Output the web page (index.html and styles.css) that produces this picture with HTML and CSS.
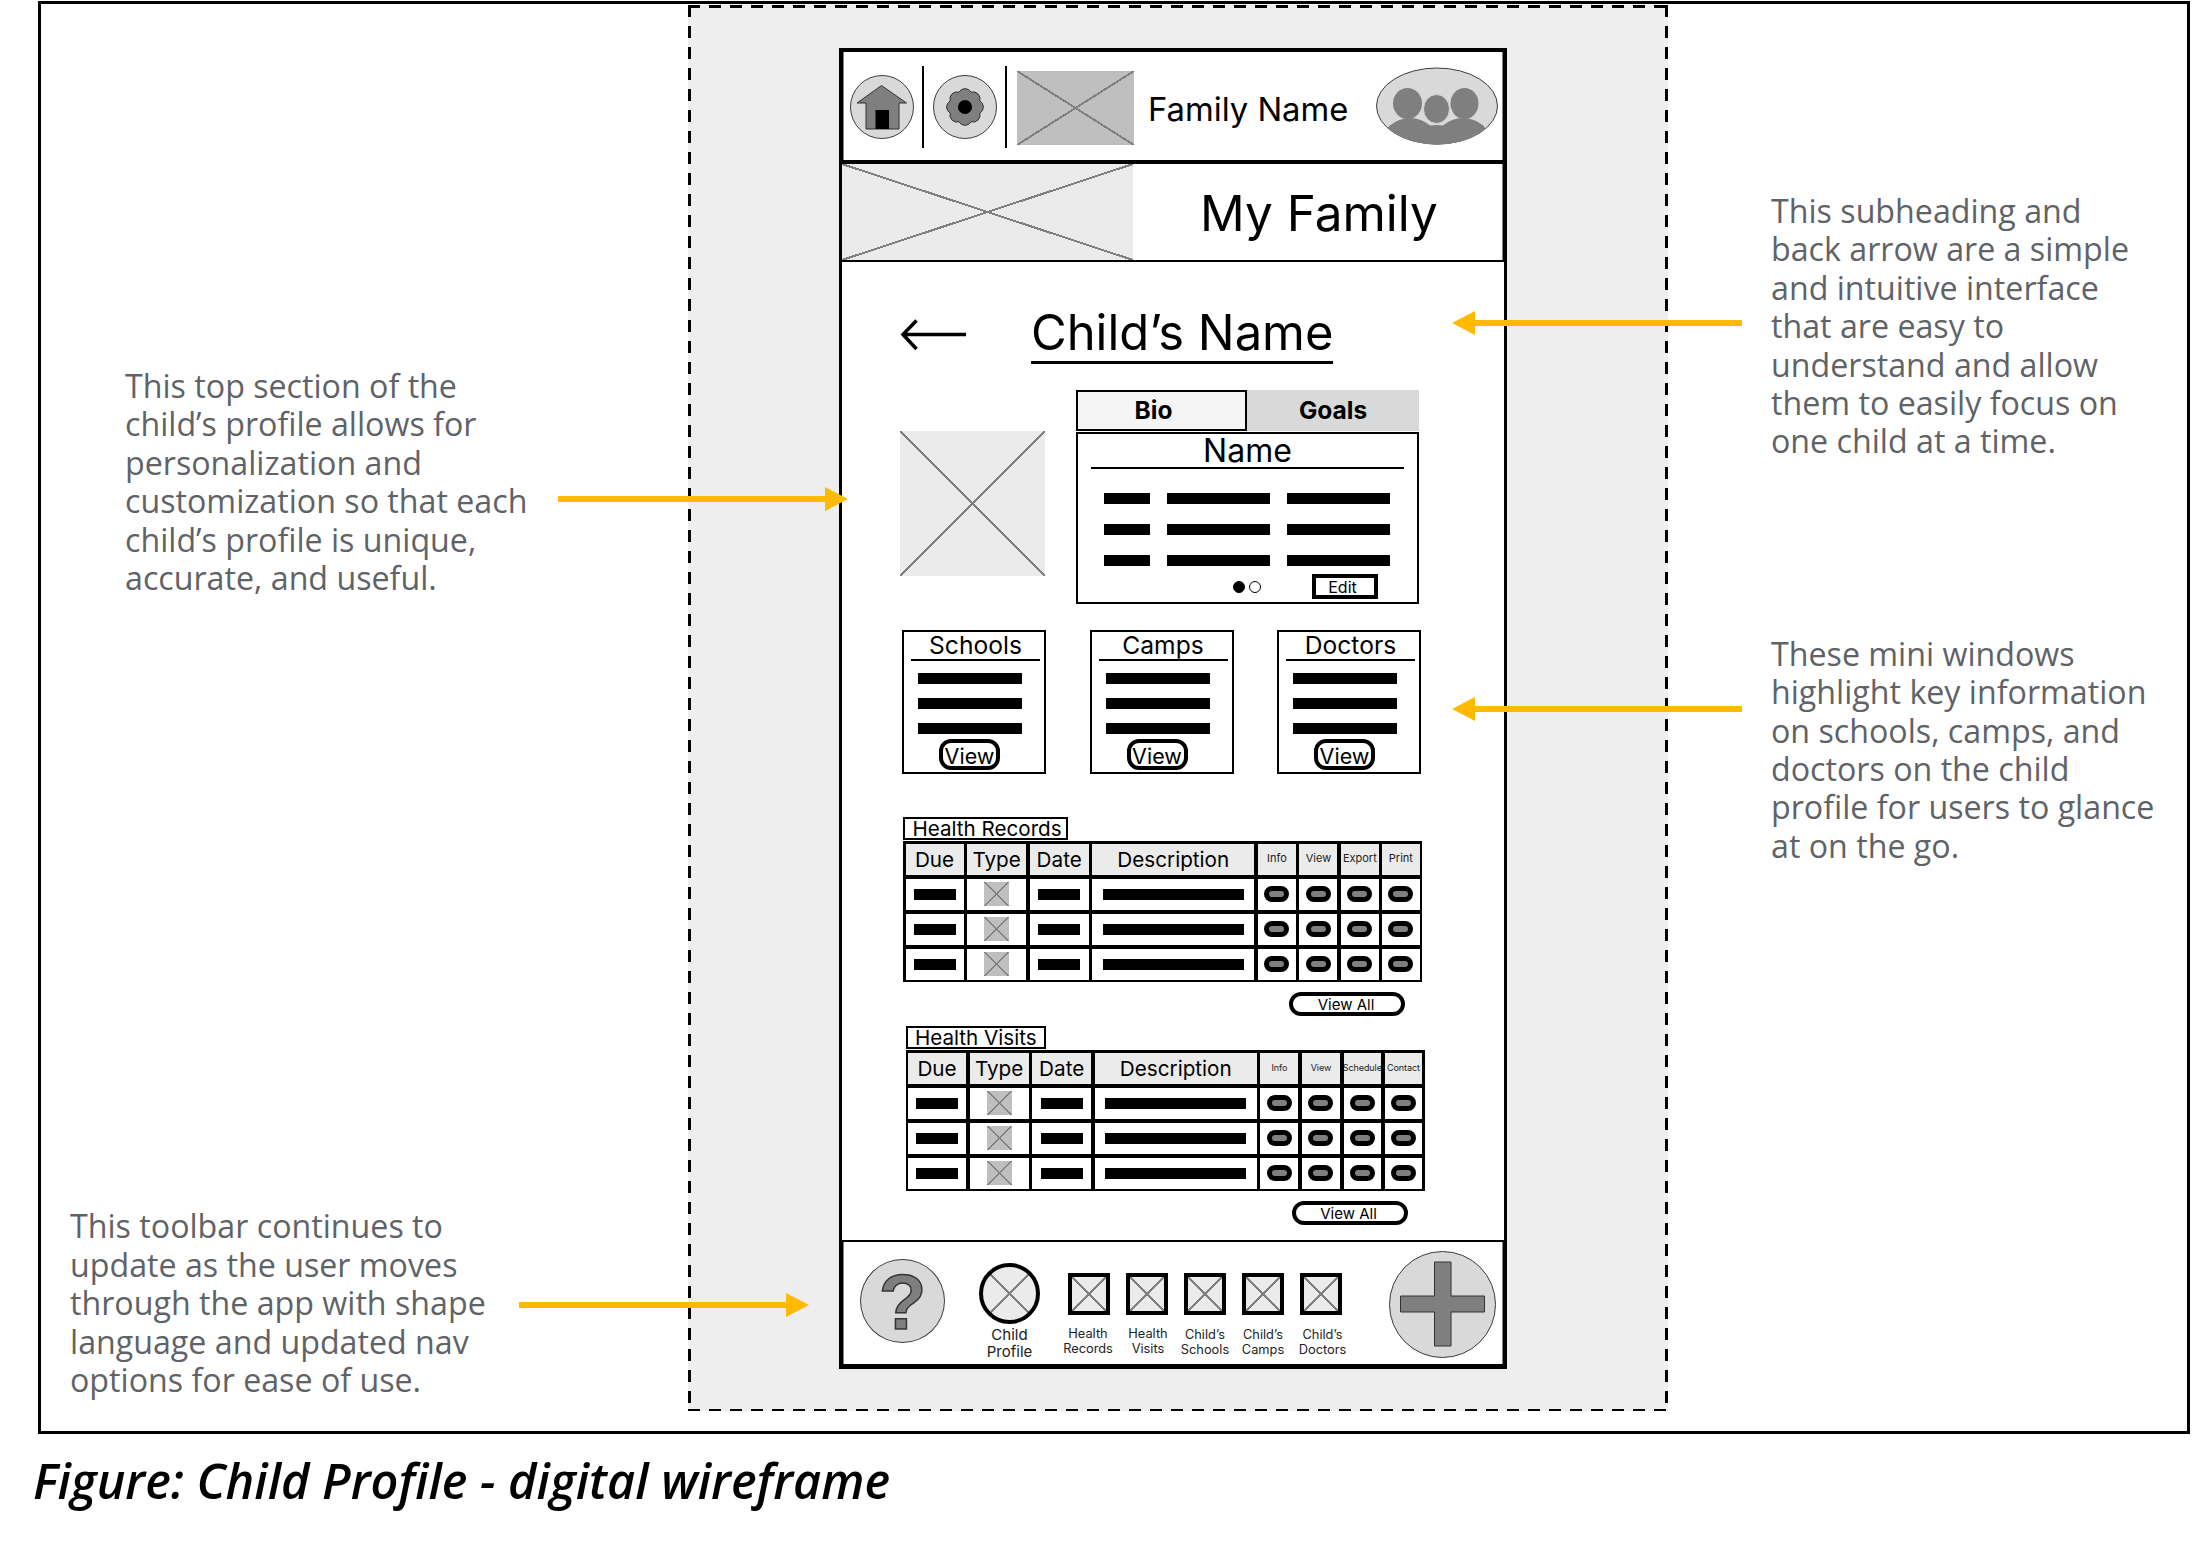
FILE: index.html
```html
<!DOCTYPE html>
<html lang="en">
<head>
<meta charset="utf-8">
<title>Child Profile - digital wireframe</title>
<link rel="stylesheet" href="styles.css">
</head>
<body>
<main class="frame">
  <aside class="notes notes-left">
    <p class="note note-top">This top section of the<br>child’s profile allows for<br>personalization and<br>customization so that each<br>child’s profile is unique,<br>accurate, and useful.</p>
    <p class="note note-bottom">This toolbar continues to<br>update as the user moves<br>through the app with shape<br>language and updated nav<br>options for ease of use.</p>
  </aside>

  <section class="panel">
    <div class="phone">
      <header class="app-header">
        <svg class="ico-home" viewBox="0 0 64 64"><circle cx="32" cy="32" r="31.5" class="disc"/><path class="glyph" d="M31.5 10.5 56.5 28H49V54H16V28H7Z"/><rect x="25.5" y="35" width="13.5" height="19" fill="#000"/></svg>
        <span class="sep"></span>
        <svg class="ico-gear" viewBox="0 0 64 64"><circle cx="32" cy="32" r="31.5" class="disc"/><path class="glyph" d="M46.8 38.1A7 7 0 0 1 38.1 46.8 7 7 0 0 1 25.9 46.8 7 7 0 0 1 17.2 38.1 7 7 0 0 1 17.2 25.9 7 7 0 0 1 25.9 17.2 7 7 0 0 1 38.1 17.2 7 7 0 0 1 46.8 25.9 7 7 0 0 1 46.8 38.1Z"/><circle cx="32" cy="32" r="7" fill="#000"/></svg>
        <span class="sep"></span>
        <div class="ph ph-dark logo"></div>
        <span class="family-name">Family Name</span>
        <svg class="ico-family" viewBox="0 0 122 78"><defs><clipPath id="oval"><ellipse cx="61" cy="39" rx="60.5" ry="38.5"/></clipPath></defs><ellipse cx="61" cy="39" rx="60.5" ry="38" class="disc"/><g clip-path="url(#oval)" fill="#7f7f7f"><ellipse cx="34" cy="76" rx="28" ry="25"/><ellipse cx="87" cy="76" rx="28" ry="25"/><ellipse cx="60.5" cy="84" rx="30" ry="26"/></g><ellipse cx="31.5" cy="36.5" rx="14.5" ry="15.5" fill="#7f7f7f"/><ellipse cx="88.5" cy="36.5" rx="14" ry="15.5" fill="#7f7f7f"/><ellipse cx="60.5" cy="42" rx="13" ry="14.5" fill="#7f7f7f" stroke="#d9d9d9" stroke-width="1"/></svg>
      </header>
      <div class="banner">
        <div class="ph ph-light banner-img"></div>
        <h1 class="banner-title">My Family</h1>
      </div>

      <div class="content">
        <div class="title-row">
          <svg class="back" viewBox="0 0 66 32"><path d="M66 15.5H3M16.5 1.5 3 15.5 16.5 30" fill="none" stroke="#000" stroke-width="3.5"/></svg>
          <h2 class="child-name">Child’s Name</h2>
        </div>

        <div class="profile-row">
          <div class="ph ph-light photo"></div>
          <div class="bio">
            <div class="tabs">
              <div class="tab tab-active">Bio</div>
              <div class="tab tab-idle">Goals</div>
            </div>
            <div class="bio-panel">
              <div class="bio-name">Name</div>
              <div class="bio-bars">
                <i class="bar"></i><i class="bar"></i><i class="bar"></i>
                <i class="bar"></i><i class="bar"></i><i class="bar"></i>
                <i class="bar"></i><i class="bar"></i><i class="bar"></i>
              </div>
              <div class="bio-foot">
                <span class="dot dot-on"></span><span class="dot"></span>
                <span class="edit">Edit</span>
              </div>
            </div>
          </div>
        </div>

        <div class="cards">
          <article class="card"><div class="card-title">Schools</div><i class="bar card-bar"></i><i class="bar card-bar"></i><i class="bar card-bar"></i><span class="view">View</span></article>
          <article class="card"><div class="card-title">Camps</div><i class="bar card-bar"></i><i class="bar card-bar"></i><i class="bar card-bar"></i><span class="view">View</span></article>
          <article class="card"><div class="card-title">Doctors</div><i class="bar card-bar"></i><i class="bar card-bar"></i><i class="bar card-bar"></i><span class="view">View</span></article>
        </div>

        <section class="records">
          <div class="records-tab tab-records">Health Records</div>
          <div class="grid">
            <div class="cell head">Due</div><div class="cell head">Type</div><div class="cell head">Date</div><div class="cell head">Description</div>
            <div class="cell head small">Info</div><div class="cell head small">View</div><div class="cell head small">Export</div><div class="cell head small">Print</div>

            <div class="cell"><i class="bar b-short"></i></div><div class="cell"><div class="ph ph-dark type"></div></div><div class="cell"><i class="bar b-short"></i></div><div class="cell"><i class="bar b-long"></i></div>
            <div class="cell"><i class="pill"></i></div><div class="cell"><i class="pill"></i></div><div class="cell"><i class="pill"></i></div><div class="cell"><i class="pill"></i></div>

            <div class="cell"><i class="bar b-short"></i></div><div class="cell"><div class="ph ph-dark type"></div></div><div class="cell"><i class="bar b-short"></i></div><div class="cell"><i class="bar b-long"></i></div>
            <div class="cell"><i class="pill"></i></div><div class="cell"><i class="pill"></i></div><div class="cell"><i class="pill"></i></div><div class="cell"><i class="pill"></i></div>

            <div class="cell"><i class="bar b-short"></i></div><div class="cell"><div class="ph ph-dark type"></div></div><div class="cell"><i class="bar b-short"></i></div><div class="cell"><i class="bar b-long"></i></div>
            <div class="cell"><i class="pill"></i></div><div class="cell"><i class="pill"></i></div><div class="cell"><i class="pill"></i></div><div class="cell"><i class="pill"></i></div>
          </div>
          <span class="view-all">View All</span>
        </section>

        <section class="records records-visits">
          <div class="records-tab tab-visits">Health Visits</div>
          <div class="grid">
            <div class="cell head">Due</div><div class="cell head">Type</div><div class="cell head">Date</div><div class="cell head">Description</div>
            <div class="cell head tiny">Info</div><div class="cell head tiny">View</div><div class="cell head tiny">Schedule</div><div class="cell head tiny">Contact</div>

            <div class="cell"><i class="bar b-short"></i></div><div class="cell"><div class="ph ph-dark type"></div></div><div class="cell"><i class="bar b-short"></i></div><div class="cell"><i class="bar b-long"></i></div>
            <div class="cell"><i class="pill"></i></div><div class="cell"><i class="pill"></i></div><div class="cell"><i class="pill"></i></div><div class="cell"><i class="pill"></i></div>

            <div class="cell"><i class="bar b-short"></i></div><div class="cell"><div class="ph ph-dark type"></div></div><div class="cell"><i class="bar b-short"></i></div><div class="cell"><i class="bar b-long"></i></div>
            <div class="cell"><i class="pill"></i></div><div class="cell"><i class="pill"></i></div><div class="cell"><i class="pill"></i></div><div class="cell"><i class="pill"></i></div>

            <div class="cell"><i class="bar b-short"></i></div><div class="cell"><div class="ph ph-dark type"></div></div><div class="cell"><i class="bar b-short"></i></div><div class="cell"><i class="bar b-long"></i></div>
            <div class="cell"><i class="pill"></i></div><div class="cell"><i class="pill"></i></div><div class="cell"><i class="pill"></i></div><div class="cell"><i class="pill"></i></div>
          </div>
          <span class="view-all">View All</span>
        </section>
      </div>

      <nav class="toolbar">
        <div class="help">?</div>
        <div class="nav-profile">
          <div class="ph ph-light profile-ring"></div>
          <div class="nav-label label-big">Child<br>Profile</div>
        </div>
        <div class="nav-items">
          <div class="nav-item"><div class="ph ph-light nav-box"></div><div class="nav-label label-records">Health<br>Records</div></div>
          <div class="nav-item"><div class="ph ph-light nav-box"></div><div class="nav-label label-visits">Health<br>Visits</div></div>
          <div class="nav-item"><div class="ph ph-light nav-box"></div><div class="nav-label label-low">Child’s<br>Schools</div></div>
          <div class="nav-item"><div class="ph ph-light nav-box"></div><div class="nav-label label-low">Child’s<br>Camps</div></div>
          <div class="nav-item"><div class="ph ph-light nav-box"></div><div class="nav-label label-low label-doctors">Child’s<br>Doctors</div></div>
        </div>
        <svg class="ico-plus" viewBox="0 0 107 107"><circle cx="53.5" cy="53.5" r="53" class="disc"/><path class="glyph" d="M45.5 11H62V45H95.5V61H62V95H45.5V61H11.5V45H45.5Z"/></svg>
      </nav>
    </div>
  </section>

  <aside class="notes notes-right">
    <p class="note note-sub">This subheading and<br>back arrow are a simple<br>and intuitive interface<br>that are easy to<br>understand and allow<br>them to easily focus on<br>one child at a time.</p>
    <p class="note note-mini">These mini windows<br>highlight key information<br>on schools, camps, and<br>doctors on the child<br>profile for users to glance<br>at on the go.</p>
  </aside>

  <svg class="arrow arrow-sub" viewBox="0 0 290 24"><path d="M290 9H23V0L0 12 23 24V15H290Z"/></svg>
  <svg class="arrow arrow-top" viewBox="0 0 290 24"><path d="M0 9H267V0L290 12 267 24V15H0Z"/></svg>
  <svg class="arrow arrow-mini" viewBox="0 0 290 24"><path d="M290 9H23V0L0 12 23 24V15H290Z"/></svg>
  <svg class="arrow arrow-bottom" viewBox="0 0 290 24"><path d="M0 9H267V0L290 12 267 24V15H0Z"/></svg>
</main>
<p class="caption">Figure: Child Profile - digital wireframe</p>
</body>
</html>
```

FILE: styles.css
```css
* { box-sizing: border-box; }
html, body { margin: 0; padding: 0; background: #fff; }
body { width: 2195px; height: 1553px; overflow: hidden; font-family: "Inter", "Liberation Sans", sans-serif; color: #000; }
h1, h2, p { margin: 0; font-weight: 400; }
i { display: block; }

.frame { position: relative; display: flex; width: 2152px; height: 1433px; margin: 1px 0 0 38px; border: 3px solid #000; }

.notes { font-family: "Open Sans", "Liberation Sans", sans-serif; color: #5f6368; font-size: 32.2px; line-height: 38.4px; white-space: nowrap; }
.notes-left { width: 647px; flex: none; padding-top: 363px; }
.notes-right { flex: 1; padding: 188px 0 0 103px; }
.note-top { margin-left: 84px; }
.note-bottom { margin: 610px 0 0 29px; }
.note-mini { margin-top: 174px; }

.panel { width: 980px; height: 1406px; flex: none; margin-top: 1px; padding: 43px 0 0 151px;
  background:
    linear-gradient(90deg, #000 12px, transparent 12px) 0 0 / 21px 2.5px repeat-x,
    linear-gradient(90deg, #000 12px, transparent 12px) 0 100% / 21px 2.5px repeat-x,
    linear-gradient(#000 12px, transparent 12px) 0 0 / 3px 21px repeat-y,
    linear-gradient(#000 12px, transparent 12px) 100% 0 / 3px 21px repeat-y,
    #eee; }

.phone { display: flex; flex-direction: column; width: 668px; height: 1321px; background: #fff; border: 3px solid #000; border-top-width: 4px; border-bottom-width: 5px; }

/* placeholder: filled box crossed corner to corner */
.ph { --fill: #ebebeb; --line: #7f7f7f; --w: 1px;
  background:
    linear-gradient(to top right, transparent calc(50% - var(--w)), var(--line) calc(50% - var(--w)), var(--line) calc(50% + var(--w)), transparent calc(50% + var(--w))),
    linear-gradient(to bottom right, transparent calc(50% - var(--w)), var(--line) calc(50% - var(--w)), var(--line) calc(50% + var(--w)), transparent calc(50% + var(--w))),
    var(--fill); }
.ph-dark { --fill: #bfbfbf; }

.disc { fill: #d9d9d9; stroke: #3c3c3c; stroke-width: 1; }
.glyph { fill: #7f7f7f; stroke: #333; stroke-width: 1; }

.app-header { display: flex; align-items: center; height: 108px; flex: none; padding: 0 6px 0 8px; border-bottom: 4px solid #000; box-sizing: content-box; box-shadow: inset 1.5px 0 #000, inset -1.5px 0 #000; }
.ico-home { width: 64px; height: 64px; flex: none; margin-top: 1px; }
.ico-gear { width: 64px; height: 64px; flex: none; margin-top: 2px; }
.sep { width: 2px; height: 82px; flex: none; margin: 2px 9px 0 8px; background: #000; }
.logo { width: 117px; height: 74px; flex: none; margin: 4px 0 0 1px; }
.family-name { margin: 5px 0 0 14px; font-size: 32.8px; line-height: 40px; white-space: nowrap; }
.ico-family { width: 122px; height: 78px; flex: none; margin-left: auto; }

.banner { display: flex; align-items: center; height: 98px; flex: none; border-bottom: 2px solid #000; box-shadow: inset 1.5px 0 #000, inset -1.5px 0 #000; }
.banner-img { width: 291px; height: 96px; flex: none; }
.banner-title { margin: 2px 0 0 67px; font-size: 49.5px; line-height: 60px; white-space: nowrap; }

.content { flex: 1; padding: 44px 0 0; }
.title-row { display: flex; align-items: flex-start; height: 58px; padding-left: 58px; }
.back { width: 66px; height: 32px; flex: none; margin-top: 13px; }
.child-name { margin-left: 65px; font-size: 48.9px; line-height: 54px; height: 58px; border-bottom: 3px solid #000; white-space: nowrap; }

.profile-row { display: flex; align-items: flex-start; margin: 26px 0 0 58px; }
.photo { width: 145px; height: 145px; flex: none; margin-top: 41px; }
.bio { width: 343px; margin-left: 31px; }
.tabs { display: flex; height: 41px; }
.tab { display: flex; align-items: center; justify-content: center; padding-bottom: 2px; font-size: 24.5px; font-weight: 700; }
.tab-active { width: 171px; padding-right: 16px; background: #f5f5f5; border: 2.5px solid #000; }
.tab-idle { flex: 1; background: #d9d9d9; }
.bio-panel { height: 172px; margin-top: 1px; border: 2.5px solid #000; }
.bio-name { height: 35px; margin: 0 13px; padding-top: 1px; font-size: 32px; line-height: 32px; text-align: center; border-bottom: 2px solid #000; }
.bar { height: 11px; background: #000; }
.bio-bars { display: grid; grid-template-columns: 46px 103.5px 103.5px; gap: 20px 16.5px; margin: 24px 0 0 26px; }
.bio-foot { display: flex; align-items: center; gap: 4px; margin-top: 8px; padding-left: 155px; }
.dot { width: 12px; height: 12px; border: 1px solid #000; border-radius: 50%; background: #fff; }
.dot-on { background: #000; }
.edit { display: flex; align-items: center; justify-content: center; width: 66px; height: 25px; margin-left: 47px; padding-right: 5px; border: 4px solid #000; font-size: 16px; }

.cards { display: flex; gap: 43.5px; margin: 26px 0 0 60px; }
.card { display: flex; flex-direction: column; width: 144px; height: 144px; border: 2.5px solid #000; }
.card-title { height: 29px; margin: 0 4px 0 7px; font-size: 24.6px; line-height: 27px; text-align: center; border-bottom: 2px solid #000; flex: none; }
.card-bar { width: 104px; flex: none; margin: 12px 0 0 14px; }
.card-bar + .card-bar { margin-top: 14px; }
.view { display: flex; align-items: center; justify-content: center; width: 61px; height: 31px; margin: 5px 0 0 35px; padding-top: 2px; border: 4px solid #000; border-radius: 12px; font-size: 21.5px; flex: none; }

.records { margin: 43px 0 0 61px; }
.records-visits { margin: 10px 0 0 63.5px; }
.records-tab { height: 23px; margin-bottom: 1px; border: 2px solid #000; padding-left: 7.5px; font-size: 20.6px; line-height: 20px; white-space: nowrap; }
.tab-records { width: 165px; }
.tab-visits { width: 140px; }
.grid { display: grid; width: 519px; grid-template-columns: 58px 59px 59px 162px 38px 38px 37.5px 37.5px; grid-template-rows: repeat(4, 31px); gap: 4px 3.6px; padding: 2.5px; background: #000; }
.cell { display: flex; align-items: center; justify-content: center; background: #fff; overflow: hidden; white-space: nowrap; }
.head { background: #ebebeb; font-size: 20.7px; }
.small { font-size: 11px; padding-bottom: 2px; color: #222; }
.tiny { font-size: 9px; padding-bottom: 2px; color: #222; letter-spacing: -0.1px; }
.b-short { width: 42px; }
.b-long { width: 141px; }
.type { width: 25px; height: 24px; --w: .7px; }
.pill { width: 25px; height: 16px; background: #7f7f7f; border: 5px solid #000; border-width: 5px 5.5px; border-radius: 8px; }
.view-all { display: flex; align-items: center; justify-content: center; width: 116px; height: 24px; margin: 10px 0 0 386px; padding-top: 1px; padding-right: 2px; border: 4px solid #000; border-radius: 12px; font-size: 15px; }

.toolbar { display: flex; align-items: flex-start; height: 124px; flex: none; padding-left: 18px; border-top: 2px solid #000; box-shadow: inset 1.5px 0 #000, inset -1.5px 0 #000; }
.help { width: 85px; height: 84px; flex: none; margin-top: 17px; border: 1px solid #3c3c3c; border-radius: 50%; background: #d9d9d9; color: #7f7f7f; -webkit-text-stroke: 1.5px #333; font: 700 78px/84px "Liberation Sans", sans-serif; text-align: center; }
.nav-profile { display: flex; flex-direction: column; align-items: center; width: 61px; flex: none; margin: 21px 0 0 34px; }
.profile-ring { width: 61px; height: 61px; border: 4.5px solid #000; border-radius: 50%; }
.nav-items { display: flex; margin: 31px 0 0 20px; flex: none; }
.nav-item { display: flex; flex-direction: column; align-items: center; width: 58px; }
.nav-box { width: 42px; height: 42px; flex: none; border: 4px solid #000; }
.nav-label { margin-top: 12px; font-size: 12.8px; line-height: 14.5px; text-align: center; white-space: nowrap; color: #222; }
.label-low { margin-top: 13px; }
.label-big { margin-top: 3px; font-size: 15px; line-height: 16.5px; }
.label-records { margin-right: 2px; }
.label-visits { margin-left: 2px; }
.label-doctors { margin-left: 3px; }
.ico-plus { width: 107px; height: 107px; flex: none; margin: 9px 0 0 39px; }

/* callout arrows lie over the panel */
.arrow { position: absolute; width: 290px; height: 24px; fill: #ffba00; }
.arrow-sub { left: 1411px; top: 307px; }
.arrow-top { left: 517px; top: 483px; }
.arrow-mini { left: 1411px; top: 693px; }
.arrow-bottom { left: 478px; top: 1289px; }

.caption { margin: 18px 0 0 33px; font-family: "Open Sans", "Liberation Sans", sans-serif; font-style: italic; font-weight: 600; font-size: 48.6px; line-height: 56px; white-space: nowrap; }
```
